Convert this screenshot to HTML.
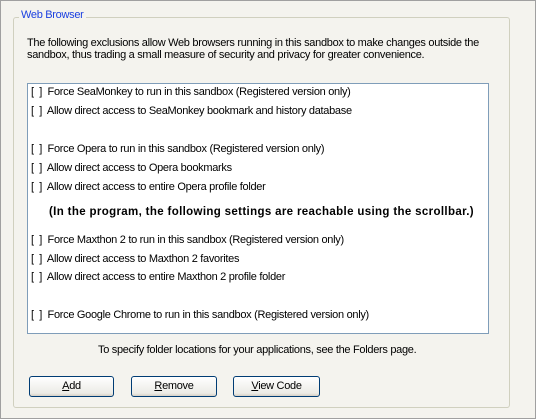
<!DOCTYPE html>
<html><head><style>
body{margin:0;width:536px;height:419px;background:#f2f1ec;font-family:"Liberation Sans",sans-serif;font-size:11px;letter-spacing:-0.3px;color:#000;position:relative;overflow:hidden}
.outer{position:absolute;left:0;top:0;width:534px;height:417px;border:1px solid #a0a0a0;background:#f4f3ee}
.gb{position:absolute;left:13px;top:17px;width:495px;height:389px;border:1px solid #d0d0bf;border-radius:3px}
.leg{position:absolute;left:19px;top:9px;background:#f4f3ee;color:#1a3fe0;padding:0 2px;font-size:11px}
.t{position:absolute;white-space:nowrap}
.lb{position:absolute;left:27px;top:83px;width:460px;height:249px;border:1px solid #7f9db9;background:#fff}
.btn{position:absolute;top:376px;height:19px;border:1px solid #003c74;border-radius:3px;background:linear-gradient(#fff,#ecebe6 85%,#d6d0c5);text-align:center;line-height:19px}
u{text-decoration:underline}
</style></head><body>
<div class="outer"></div>
<div class="gb"></div>
<div class="leg">Web Browser</div>
<div class="t" style="left:27px;top:37px">The following exclusions allow Web browsers running in this sandbox to make changes outside the</div>
<div class="t" style="left:27px;top:49px">sandbox, thus trading a small measure of security and privacy for greater convenience.</div>
<div class="lb"></div>
<div class="t" style="left:31px;top:86px">[&nbsp; ]&nbsp; Force SeaMonkey to run in this sandbox (Registered version only)</div>
<div class="t" style="left:31px;top:105px">[&nbsp; ]&nbsp; Allow direct access to SeaMonkey bookmark and history database</div>
<div class="t" style="left:31px;top:143px">[&nbsp; ]&nbsp; Force Opera to run in this sandbox (Registered version only)</div>
<div class="t" style="left:31px;top:162px">[&nbsp; ]&nbsp; Allow direct access to Opera bookmarks</div>
<div class="t" style="left:31px;top:181px">[&nbsp; ]&nbsp; Allow direct access to entire Opera profile folder</div>
<div class="t" style="left:49px;top:206px;font-weight:bold;font-size:11.5px;letter-spacing:0.35px">(In the program, the following settings are reachable using the scrollbar.)</div>
<div class="t" style="left:31px;top:234px">[&nbsp; ]&nbsp; Force Maxthon 2 to run in this sandbox (Registered version only)</div>
<div class="t" style="left:31px;top:253px">[&nbsp; ]&nbsp; Allow direct access to Maxthon 2 favorites</div>
<div class="t" style="left:31px;top:271px">[&nbsp; ]&nbsp; Allow direct access to entire Maxthon 2 profile folder</div>
<div class="t" style="left:31px;top:309px">[&nbsp; ]&nbsp; Force Google Chrome to run in this sandbox (Registered version only)</div>
<div class="t" style="left:98px;top:344px">To specify folder locations for your applications, see the Folders page.</div>
<div class="btn" style="left:29px;width:83px"><u>A</u>dd</div>
<div class="btn" style="left:131px;width:84px"><u>R</u>emove</div>
<div class="btn" style="left:233px;width:85px"><u>V</u>iew Code</div>
</body></html>
